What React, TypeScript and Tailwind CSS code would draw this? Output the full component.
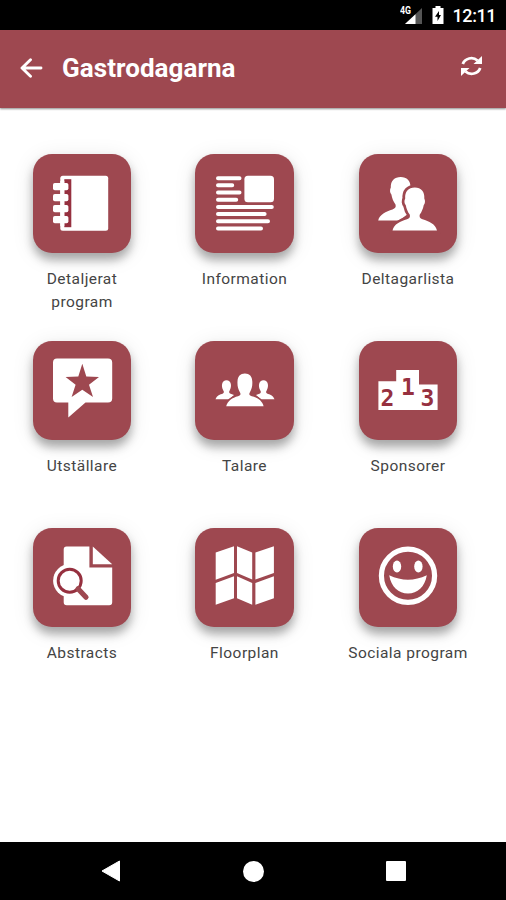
import type { ReactNode } from 'react'

const RED = '#9e4850'
const EDGE = '#96303f'

const icons: Record<string, ReactNode> = {
  notebook: (
    <>
      <rect x="27.3" y="21.8" width="47.9" height="55" rx="2.5" />
      <rect x="31.3" y="25.2" width="7" height="48" fill={EDGE} />
      {[29, 40, 51, 62].map((y) => (
        <rect key={y} x="20" y={y} width="15.4" height="7.2" rx="1.8" />
      ))}
      <rect x="27.3" y="27" width="4" height="45" />
    </>
  ),
  article: (
    <>
      <path
        d="M23 24.2H44.5M23 31.3H37.2M23 38.5H44.5M23 45.7H41.2M23 52.9H76.8M23 60.1H69.6M23 67.3H73M23 74.5H66"
        stroke="white" strokeWidth="4" strokeLinecap="round"
      />
      <rect x="49.4" y="21.7" width="29.6" height="26.6" rx="3.5" />
    </>
  ),
  users: (
    <>
      <path d="M19.2 66.4C20.5 60.5 27 57.5 33.5 55.5C36.2 54.4 37.3 53 36.5 50.5C34.5 47.5 33 44.5 32.4 40.5C30.8 39 30.6 35.5 31.8 33.5C31.5 27 35.5 23 41.7 23C47.8 23 51.8 27 51.5 33.5C52.5 36 52 39 51 40.5C50 45 49 48 47 50.5C46.5 54 48 55 53 57L40 66.4Z" />
      <path
        d="M33.5 76.5C35 70 41.5 67.3 48 65.3C50.6 64.4 51.5 62.8 50.7 60.5C48.6 58 47.4 54.5 46.8 51.3C45.2 49.5 45 46.5 46.2 44.5C45.7 37.5 49.3 33.4 55.8 33.4C62.2 33.4 65.8 37.5 65.3 44.5C66.4 46.5 66.2 49.5 64.7 51.3C64.1 54.5 62.8 58 60.8 60.5C60 62.8 61 64.4 63.5 65.3C70 67.3 76.5 70 78 76.5Z"
        stroke={RED} strokeWidth="5.5" paintOrder="stroke"
      />
    </>
  ),
  starBubble: (
    <>
      <path d="M24 17.4H75Q79.2 17.4 79.2 21.5V57.5Q79.2 61.6 75 61.6H52.5L35.3 76.4V61.6H24Q20 61.6 20 57.5V21.5Q20 17.4 24 17.4Z" />
      <path d="M49.3 22.8L53.3 35.4L66 36.1L56 43.8L60 56L49.3 48.8L38.6 56L42.6 43.8L32.6 36.1L45.3 35.4Z" fill={RED} />
    </>
  ),
  group: (
    <>
      <path d="M20.5 58.3C22 54 25 53.5 28 52.4C29.3 51.6 29 50.5 28.3 49.5C25.8 45 26.8 39.2 31.5 39.2C36.2 39.2 37.2 45 34.7 49.5C34 50.5 33.8 51.6 35 52.4L39 54L34 58.3Z" />
      <path d="M79.5 58.3C78 54 75 53.5 72 52.4C70.7 51.6 71 50.5 71.7 49.5C74.2 45 73.2 39.2 68.5 39.2C63.8 39.2 62.8 45 65.3 49.5C66 50.5 66.2 51.6 65 52.4L61 54L66 58.3Z" />
      <path
        d="M31.2 65.3C32.3 60 37.5 56.5 43 55.2C45.5 54.5 46 53.3 45 51.4C42.8 48 42.3 44.5 42.5 40.5C42.7 35.3 45.3 32.5 49.9 32.5C54.5 32.5 57.1 35.3 57.3 40.5C57.5 44.5 57 48 54.8 51.4C53.8 53.3 54.3 54.5 56.8 55.2C62.3 56.5 67.5 60 68.6 65.3Z"
        stroke={RED} strokeWidth="3" paintOrder="stroke"
      />
    </>
  ),
  podium: (
    <>
      <path d="M19.4 40.2H37.2V29H60V43.4H78.6V69H19.4Z" />
      <g fill={EDGE} fontFamily="'DejaVu Sans Mono', monospace" fontWeight="700" fontSize="23" textAnchor="middle">
        <text x="28.5" y="65">2</text>
        <text x="49" y="54">1</text>
        <text x="68.5" y="65">3</text>
      </g>
    </>
  ),
  docSearch: (
    <>
      <path d="M33.5 18.4H56.4V39.4H79.2V74.2Q79.2 77.2 76.2 77.2H33.7Q30.7 77.2 30.7 74.2V21.4Q30.7 18.4 33.5 18.4Z" />
      <path d="M59.8 18.4L79.2 36.3H59.8Z" />
      <circle cx="36.7" cy="52.7" r="16.6" />
      <circle cx="36.7" cy="52.7" r="11.5" fill="none" stroke={EDGE} strokeWidth="3" />
      <path d="M45 60.8L53 69.2" stroke={RED} strokeWidth="5.2" strokeLinecap="round" />
    </>
  ),
  map: (
    <path d="M20.7 24.4L39 18.2V45L20.7 51.8ZM42 18.2L57.2 24.4V51.6L42 45ZM60.4 24.4L78.9 18.2V45L60.4 51.6ZM20.7 55L39 48.2V70.2L20.7 76.8ZM42 48.2L57.2 55V76.8L42 70.2ZM60.4 55L78.9 48.2V70.2L60.4 76.8Z" />
  ),
  smiley: (
    <>
      <circle cx="49" cy="47.8" r="26.6" fill="none" stroke="white" strokeWidth="5.2" />
      <ellipse cx="38" cy="38.4" rx="4.2" ry="6" />
      <ellipse cx="59.4" cy="38.4" rx="4.2" ry="6" />
      <path d="M30.2 47.3Q49 56.2 67.8 47.3C65.8 59 58.5 65.6 49 65.6C39.5 65.6 32.2 59 30.2 47.3Z" />
    </>
  ),
}

const items = [
  { label: 'Detaljerat program', icon: 'notebook' },
  { label: 'Information', icon: 'article' },
  { label: 'Deltagarlista', icon: 'users' },
  { label: 'Utställare', icon: 'starBubble' },
  { label: 'Talare', icon: 'group' },
  { label: 'Sponsorer', icon: 'podium' },
  { label: 'Abstracts', icon: 'docSearch' },
  { label: 'Floorplan', icon: 'map' },
  { label: 'Sociala program', icon: 'smiley' },
]

function StatusBar() {
  return (
    <div className="flex h-[30px] shrink-0 items-center justify-end bg-black pr-[10px] text-white">
      <svg width="24" height="20" viewBox="0 0 24 20" className="mr-2">
        <text x="0" y="9" fill="white" fontSize="10" fontWeight="700" textLength="11" lengthAdjust="spacingAndGlyphs">4G</text>
        <path d="M22 3V19H5Z" fill="#555" />
        <path d="M15.5 9.2V19H5Z" fill="white" />
      </svg>
      <svg width="12" height="20" viewBox="0 0 12 20" className="mr-[9px]">
        <path d="M3.5 1H8.5V3H11.5V19H.5V3H3.5Z" fill="white" />
        <path d="M7 6L3 11.8H5.5V16L9 10H7Z" fill="black" />
      </svg>
      <span className="pt-0.5 text-[18px] leading-none font-medium tracking-[-0.45px]">12:11</span>
    </div>
  )
}

function Header() {
  return (
    <header className="flex h-[78px] shrink-0 items-center bg-[#9e4850] pr-6 pb-0.5 pl-5 text-white shadow-[0_1px_2px_rgba(0,0,0,0.45)]">
      <svg width="23" height="20" viewBox="0 0 23 20" fill="none" stroke="white" strokeWidth="2.9" strokeLinecap="round" strokeLinejoin="round">
        <path d="M10.5 1.8L2 10L10.5 18.2M2.5 10H21" />
      </svg>
      <h1 className="ml-[19px] text-[26px] leading-none font-bold tracking-[0.05px]">Gastrodagarna</h1>
      <svg width="21" height="22" viewBox="0 0 21 22" className="mb-1 ml-auto" fill="none" stroke="white" strokeWidth="2.8">
        <path d="M1.8 9A9 8.4 0 0 1 16.5 5.5M19.2 13A9 8.4 0 0 1 4.5 16.5" />
        <path d="M21 1V9H12.5ZM0 21V13H8.5Z" fill="white" stroke="none" />
      </svg>
    </header>
  )
}

function Tile({ label, icon }: { label: string; icon: string }) {
  return (
    <div className="flex h-[187px] flex-col items-center">
      <div className="size-[98.5px] shrink-0 rounded-[19px] bg-[#9e4850] shadow-[0_7px_10px_rgba(0,0,0,0.3),0_4px_22px_rgba(0,0,0,0.1)]">
        <svg viewBox="0 0 98.5 98.5" className="size-full" fill="white">{icons[icon]}</svg>
      </div>
      <div className="mt-[15px] w-[126px] text-center text-[15.5px] leading-[23px] tracking-[0.45px] text-[#444]">{label}</div>
    </div>
  )
}

export default function App() {
  return (
    <div className="flex h-[900px] w-[506px] flex-col bg-white font-['Roboto',sans-serif]">
      <StatusBar />
      <Header />
      <main className="grid flex-1 grid-cols-[163px_162px_165px] content-start pt-[46.4px] pl-[0.5px]">
        {items.map((item) => (
          <Tile key={item.label} {...item} />
        ))}
      </main>
      <nav className="grid h-[58px] shrink-0 grid-cols-[142.5px_142.5px_142.5px] items-center justify-center bg-black">
        <svg width="20" height="22" viewBox="0 0 20 22" className="mx-auto" fill="white">
          <path d="M18.5 1V21L1 11Z" stroke="white" strokeLinejoin="round" />
        </svg>
        <div className="mx-auto size-[21px] rounded-full bg-white" />
        <div className="mx-auto size-5 rounded-[1px] bg-white" />
      </nav>
    </div>
  )
}
